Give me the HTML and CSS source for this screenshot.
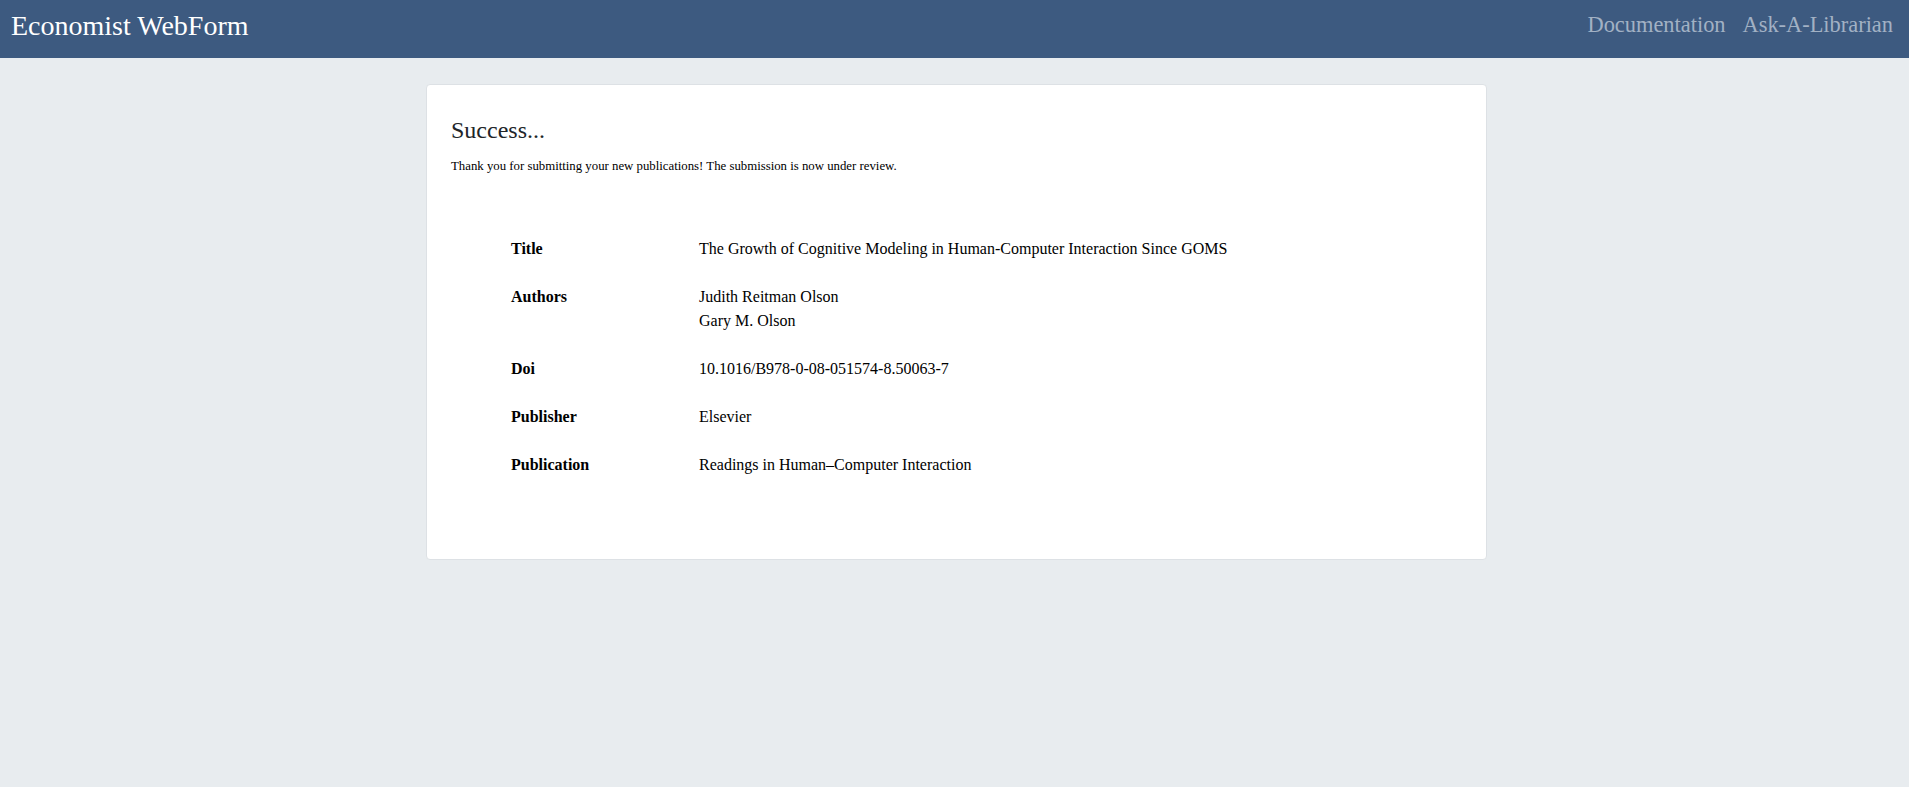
FILE: index.html
```html
<!DOCTYPE html>
<html lang="en">
<head>
<meta charset="utf-8">
<title>Economist WebForm</title>
<link rel="stylesheet" href="styles.css">
</head>
<body>
<header class="topbar">
  <a class="brand" href="#">Economist WebForm</a>
  <nav class="links">
    <a href="#">Documentation</a>
    <a href="#">Ask-A-Librarian</a>
  </nav>
</header>
<main class="card">
  <h1 class="card-title">Success...</h1>
  <p class="card-text">Thank you for submitting your new publications! The submission is now under review.</p>
  <dl class="details">
    <div class="row"><dt>Title</dt><dd>The Growth of Cognitive Modeling in Human-Computer Interaction Since GOMS</dd></div>
    <div class="row"><dt>Authors</dt><dd><div>Judith Reitman Olson</div><div>Gary M. Olson</div></dd></div>
    <div class="row"><dt>Doi</dt><dd>10.1016/B978-0-08-051574-8.50063-7</dd></div>
    <div class="row"><dt>Publisher</dt><dd>Elsevier</dd></div>
    <div class="row"><dt>Publication</dt><dd>Readings in Human–Computer Interaction</dd></div>
  </dl>
</main>
</body>
</html>
```
FILE: styles.css
```css
html, body {
  margin: 0;
  padding: 0;
}
body {
  background: #e8ecef;
  font-family: "Liberation Serif", "Times New Roman", serif;
  color: #212529;
  min-height: 787px;
}
.topbar {
  height: 58px;
  background: #3d5a80;
  display: flex;
  justify-content: space-between;
  align-items: flex-start;
  padding: 0 16px 0 11px;
  box-sizing: border-box;
}
.brand {
  color: #ffffff;
  text-decoration: none;
  font-size: 28px;
  line-height: 28px;
  padding-top: 12px;
}
.links {
  display: flex;
  gap: 17px;
  padding-top: 14px;
}
.links a {
  color: #a2b1c4;
  text-decoration: none;
  font-size: 22.4px;
  line-height: 22.4px;
}
.card {
  display: block;
  width: 1061px;
  box-sizing: border-box;
  margin: 26px 0 0 426px;
  background: #ffffff;
  border: 1px solid #dde1e5;
  border-radius: 4px;
  padding: 31px 24px 70px;
}
.card-title {
  margin: 0;
  font-size: 24px;
  font-weight: normal;
  line-height: 1.2;
  color: #212529;
}
.card-text {
  margin: 12px 0 0;
  font-size: 12.8px;
  line-height: 1.5;
  color: #000000;
}
.details {
  margin: 49px 0 0;
  padding-left: 60px;
  font-size: 16px;
  line-height: 24px;
  color: #000000;
}
.row {
  display: grid;
  grid-template-columns: 188px 1fr;
  padding: 12px 0;
}
.row dt {
  font-weight: bold;
}
.row dd {
  margin: 0;
}
```
